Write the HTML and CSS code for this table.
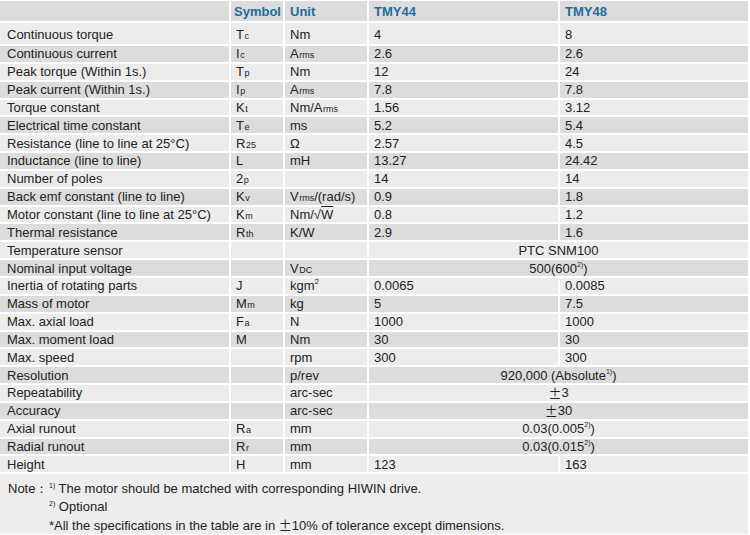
FILE: index.html
```html
<!DOCTYPE html>
<html>
<head>
<meta charset="utf-8">
<link rel="stylesheet" href="styles.css">
</head>
<body>
<div class="spec">
  <div class="row head"><div></div><div>Symbol</div><div>Unit</div><div>TMY44</div><div>TMY48</div></div>
  <div class="row light first"><div>Continuous torque</div><div>T<span class="sub">c</span></div><div>Nm</div><div>4</div><div>8</div></div>
  <div class="row dark"><div>Continuous current</div><div>I<span class="sub">c</span></div><div>A<span class="sub">rms</span></div><div>2.6</div><div>2.6</div></div>
  <div class="row light"><div>Peak torque (Within 1s.)</div><div>T<span class="sub">p</span></div><div>Nm</div><div>12</div><div>24</div></div>
  <div class="row dark"><div>Peak current (Within 1s.)</div><div>I<span class="sub">p</span></div><div>A<span class="sub">rms</span></div><div>7.8</div><div>7.8</div></div>
  <div class="row light"><div>Torque constant</div><div>K<span class="sub">t</span></div><div>Nm/A<span class="sub">rms</span></div><div>1.56</div><div>3.12</div></div>
  <div class="row dark"><div>Electrical time constant</div><div>T<span class="sub">e</span></div><div>ms</div><div>5.2</div><div>5.4</div></div>
  <div class="row light"><div>Resistance (line to line at 25°C)</div><div>R<span class="sub">25</span></div><div>Ω</div><div>2.57</div><div>4.5</div></div>
  <div class="row dark"><div>Inductance (line to line)</div><div>L</div><div>mH</div><div>13.27</div><div>24.42</div></div>
  <div class="row light"><div>Number of poles</div><div>2<span class="sub">p</span></div><div></div><div>14</div><div>14</div></div>
  <div class="row dark"><div>Back emf constant (line to line)</div><div>K<span class="sub">v</span></div><div>V<span class="sub">rms</span>/(rad/s)</div><div>0.9</div><div>1.8</div></div>
  <div class="row light"><div>Motor constant (line to line at 25°C)</div><div>K<span class="sub">m</span></div><div>Nm/√<span class="ovl">W</span></div><div>0.8</div><div>1.2</div></div>
  <div class="row dark"><div>Thermal resistance</div><div>R<span class="sub">th</span></div><div>K/W</div><div>2.9</div><div>1.6</div></div>
  <div class="row light"><div>Temperature sensor</div><div></div><div></div><div class="span">PTC SNM100</div></div>
  <div class="row dark"><div>Nominal input voltage</div><div></div><div>V<span class="sub">DC</span></div><div class="span">500(600<sup class="fn">2)</sup>)</div></div>
  <div class="row light"><div>Inertia of rotating parts</div><div>J</div><div>kgm<sup class="sq">2</sup></div><div>0.0065</div><div>0.0085</div></div>
  <div class="row dark"><div>Mass of motor</div><div>M<span class="sub">m</span></div><div>kg</div><div>5</div><div>7.5</div></div>
  <div class="row light"><div>Max. axial load</div><div>F<span class="sub">a</span></div><div>N</div><div>1000</div><div>1000</div></div>
  <div class="row dark"><div>Max. moment load</div><div>M</div><div>Nm</div><div>30</div><div>30</div></div>
  <div class="row light"><div>Max. speed</div><div></div><div>rpm</div><div>300</div><div>300</div></div>
  <div class="row dark"><div>Resolution</div><div></div><div>p/rev</div><div class="span">920,000 (Absolute<sup class="fn">1)</sup>)</div></div>
  <div class="row light"><div>Repeatability</div><div></div><div>arc-sec</div><div class="span"><span class="pm">±</span>3</div></div>
  <div class="row dark"><div>Accuracy</div><div></div><div>arc-sec</div><div class="span"><span class="pm">±</span>30</div></div>
  <div class="row light"><div>Axial runout</div><div>R<span class="sub">a</span></div><div>mm</div><div class="span">0.03(0.005<sup class="fn">2)</sup>)</div></div>
  <div class="row dark"><div>Radial runout</div><div>R<span class="sub">r</span></div><div>mm</div><div class="span">0.03(0.015<sup class="fn">2)</sup>)</div></div>
  <div class="row light"><div>Height</div><div>H</div><div>mm</div><div>123</div><div>163</div></div>
</div>
<div class="notes">
  <div class="note-label">Note：</div>
  <div class="note-body">
    <div><sup class="fn">1)</sup> The motor should be matched with corresponding HIWIN drive.</div>
    <div><sup class="fn">2)</sup> Optional</div>
    <div>*All the specifications in the table are in <span class="pm">±</span>10% of tolerance except dimensions.</div>
  </div>
</div>
</body>
</html>
```
FILE: styles.css
```css
html, body {
  margin: 0;
  padding: 0;
  background: #ffffff;
}
body {
  width: 750px;
  height: 535px;
  overflow: hidden;
  font-family: "Liberation Sans", Arial, sans-serif;
  font-size: 13px;
  color: #222222;
  padding-top: 1px;
  box-sizing: border-box;
}
.spec {
  display: grid;
  width: 748px;
  grid-template-columns: 229px 52px 82px 189px 188px;
  grid-template-rows: 20px 21px repeat(24, 15.85px);
  gap: 2px;
}
.row {
  display: contents;
}
.row > div {
  padding-left: 5px;
  display: flex;
  align-items: center;
  white-space: nowrap;
  line-height: 1;
}
.row > div:first-child {
  padding-left: 7px;
}
.row.first > div {
  padding-top: 2px;
}
.row.head > div {
  background: #dcdcdc;
  color: #1c6c9c;
  font-weight: bold;
  font-size: 13px;
}
.row.head > div:nth-child(2) {
  padding-left: 3px;
}
.row.light > div {
  background: #ececec;
}
.row.dark > div {
  background: #dcdcdc;
}
.row > div.span {
  grid-column: span 2;
  justify-content: center;
  padding-left: 0;
}
.pm {
  font-family: "Noto Sans CJK JP", "Liberation Sans", sans-serif;
  font-size: 13px;
}
.sub {
  font-size: 9px;
  position: relative;
  top: 2px;
  margin-left: 0.5px;
}
.sq {
  font-size: 8px;
  position: relative;
  top: -4px;
  vertical-align: baseline;
}
.fn {
  font-size: 7px;
  position: relative;
  top: -4px;
  vertical-align: baseline;
}
.ovl {
  text-decoration: overline;
}
.notes {
  margin-top: 2px;
  width: 748px;
  height: 60px;
  background: #ededed;
  display: flex;
  padding: 7px 0 0 8px;
  box-sizing: border-box;
  line-height: 16px;
}
.note-label {
  width: 41px;
  flex: none;
}
.note-body .fn {
  top: -5px;
}
```
